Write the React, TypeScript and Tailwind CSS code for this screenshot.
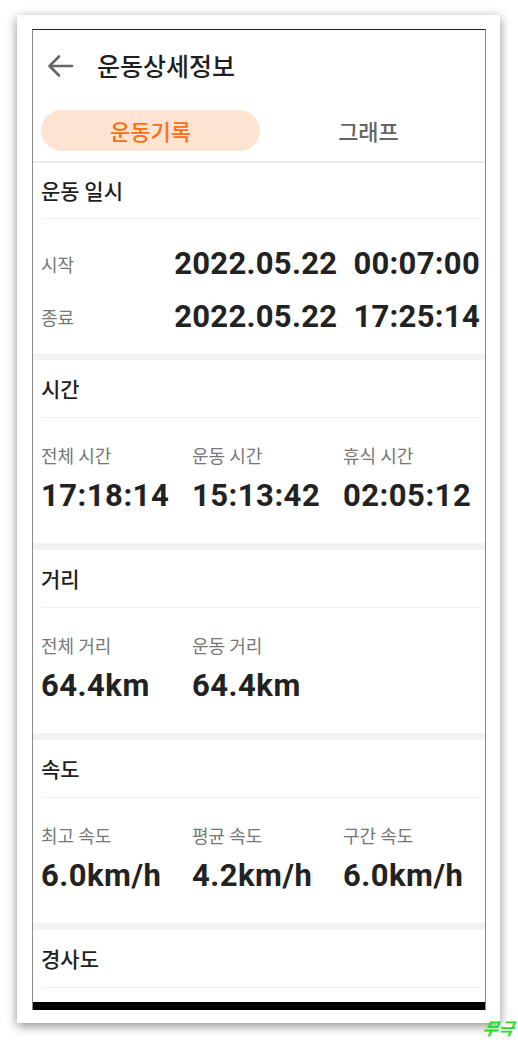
const kr = { fontFamily: '"Noto Sans CJK KR", "Noto Sans", sans-serif' };
const num = { fontFamily: 'Roboto, "Noto Sans", sans-serif' };

function SectionTitle({ title }: { title: string }) {
  return (
    <div className="px-[8px] pr-[5px]">
      <div className="h-[58px] flex items-center border-b border-[#f0f0f0] text-[21px] font-medium text-[#1f1f1f]" style={kr}>
        {title}
      </div>
    </div>
  );
}

function Band() {
  return <div className="h-[7px] bg-[#f1f2f4]" />;
}

function Stats({ items }: { items: { label: string; value: string }[] }) {
  return (
    <div className="grid grid-cols-[151px_151px_1fr] pl-[8px] pr-[5px] pt-[24px] pb-[29px]">
      {items.map((it) => (
        <div key={it.label} className="flex flex-col">
          <div className="h-[26px] flex items-center text-[18px] text-[#777]" style={kr}>
            {it.label}
          </div>
          <div className="h-[36px] mt-[10px] flex items-center text-[31px] font-bold text-[#222] tracking-[0.5px]" style={num}>
            {it.value}
          </div>
        </div>
      ))}
    </div>
  );
}

export default function App() {
  return (
    <div className="relative w-[518px] h-[1040px] bg-white overflow-hidden">
      <div className="ml-[17px] mt-[15px] w-[483px] h-[1008px] bg-white shadow-[0_3px_10px_rgba(0,0,0,0.45)] pt-[14px] pl-[15px]">
        <div className="w-[454px] h-[981px] border-x border-[#8a8a8a] border-t border-t-[#222] flex flex-col bg-white">
          {/* header */}
          <div className="h-[72px] flex items-center pl-[14px]">
            <svg width="27" height="24" viewBox="0 0 27 24" fill="none" stroke="#666" strokeWidth="2.6" strokeLinecap="round" strokeLinejoin="round">
              <path d="M25 12H2.5M12 2.5L2.5 12l9.5 9.5" />
            </svg>
            <span className="ml-[23px] text-[25px] text-[#1f1f1f] font-medium" style={kr}>
              운동상세정보
            </span>
          </div>

          {/* tabs */}
          <div className="flex pt-[8px] pb-[10px] px-[8px] border-b-2 border-[#e9e9e9]">
            <div className="w-[219px] h-[41px] rounded-full bg-[#ffe3d3] flex items-center justify-center text-[22px] font-medium text-[#ff6e14]" style={kr}>
              운동기록
            </div>
            <div className="flex-1 flex items-center justify-center text-[22px] font-medium text-[#666]" style={kr}>
              그래프
            </div>
          </div>

          {/* 운동 일시 */}
          <div className="h-[56px] px-[8px]">
            <div className="h-full flex items-center border-b border-[#f0f0f0] text-[21px] font-medium text-[#1f1f1f] mr-[-3px]" style={kr}>
              운동 일시
            </div>
          </div>
          <div className="flex flex-col gap-[17px] pl-[8px] pr-[5px] pt-[27px] pb-[18px]">
            {[
              ["시작", "2022.05.22\u00a0\u00a000:07:00"],
              ["종료", "2022.05.22\u00a0\u00a017:25:14"],
            ].map(([l, v]) => (
              <div key={l} className="h-[36px] flex items-center justify-between">
                <span className="text-[18px] text-[#777]" style={kr}>
                  {l}
                </span>
                <span className="text-[31px] font-bold text-[#222] tracking-[0.3px]" style={num}>
                  {v}
                </span>
              </div>
            ))}
          </div>

          <Band />
          <SectionTitle title="시간" />
          <Stats
            items={[
              { label: "전체 시간", value: "17:18:14" },
              { label: "운동 시간", value: "15:13:42" },
              { label: "휴식 시간", value: "02:05:12" },
            ]}
          />

          <Band />
          <SectionTitle title="거리" />
          <Stats
            items={[
              { label: "전체 거리", value: "64.4km" },
              { label: "운동 거리", value: "64.4km" },
            ]}
          />

          <Band />
          <SectionTitle title="속도" />
          <Stats
            items={[
              { label: "최고 속도", value: "6.0km/h" },
              { label: "평균 속도", value: "4.2km/h" },
              { label: "구간 속도", value: "6.0km/h" },
            ]}
          />

          <Band />
          <SectionTitle title="경사도" />
          <div className="flex-1" />
          <div className="h-[8px] bg-black" />
        </div>
      </div>

      {/* watermark */}
      <div
        className="absolute left-[483px] top-[1019px] text-[17px] leading-none font-bold italic text-[#22e022] -skew-x-12"
        style={kr}
      >
        무극
      </div>
    </div>
  );
}
